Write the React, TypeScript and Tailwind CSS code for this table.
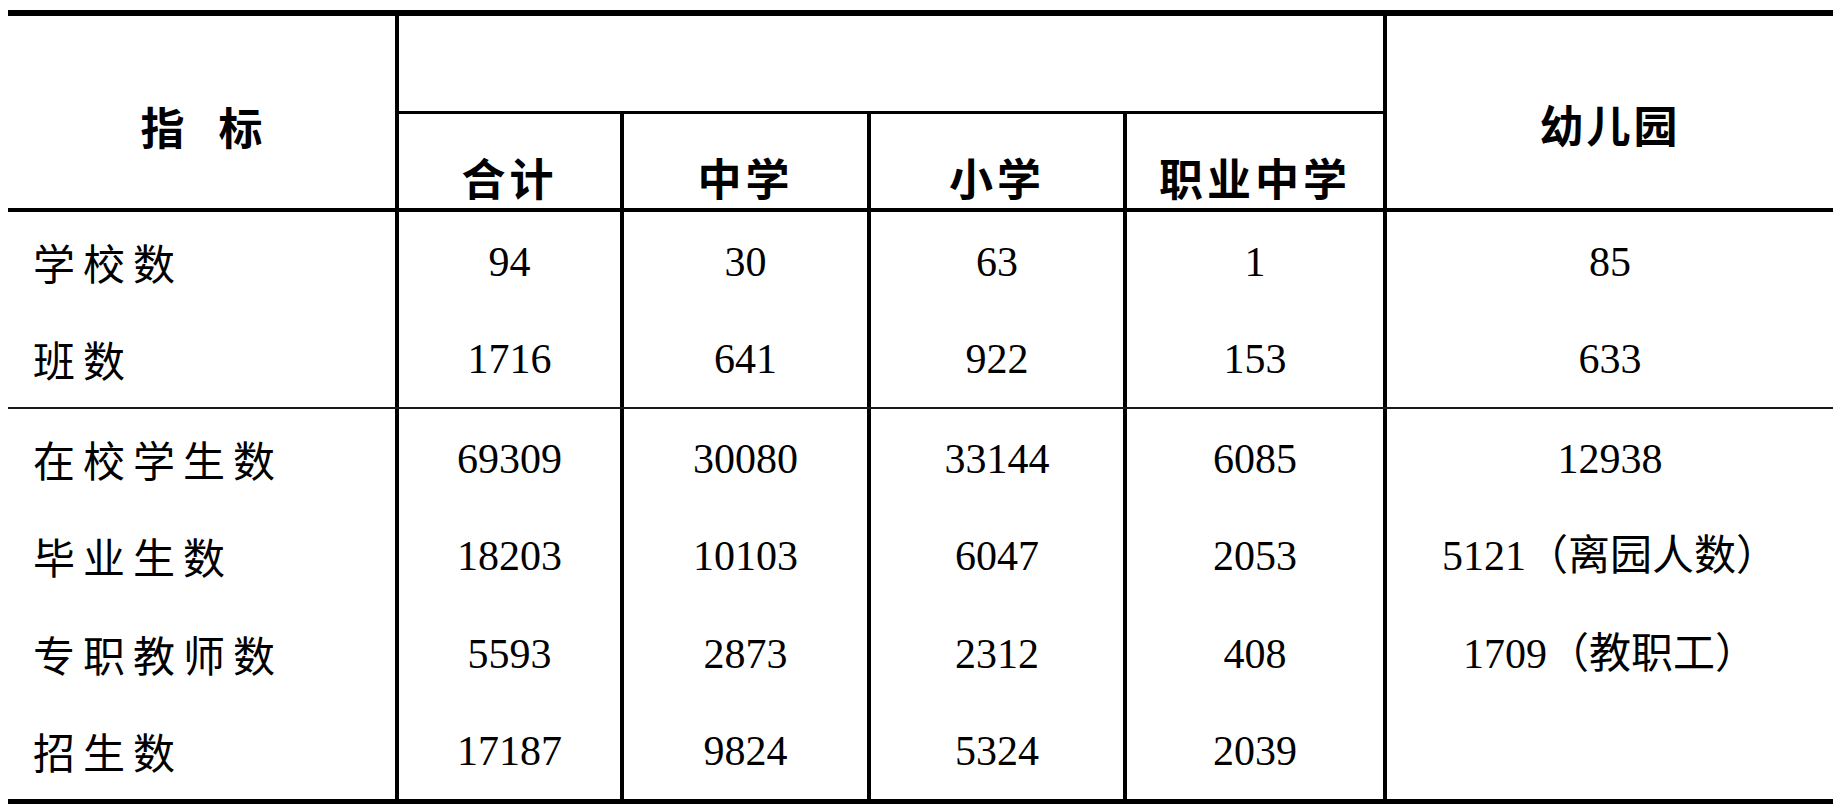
const cols = 'grid grid-cols-[387px_225px_247px_256px_260px_1fr]'

const groupA = [
  ['学校数', '94', '30', '63', '1', '85'],
  ['班数', '1716', '641', '922', '153', '633'],
]

const groupB = [
  ['在校学生数', '69309', '30080', '33144', '6085', '12938'],
  ['毕业生数', '18203', '10103', '6047', '2053', '5121（离园人数）'],
  ['专职教师数', '5593', '2873', '2312', '408', '1709（教职工）'],
  ['招生数', '17187', '9824', '5324', '2039', ''],
]

function Row({ cells }: { cells: string[] }) {
  const [label, ...vals] = cells
  return (
    <div className={`${cols} h-[97.5px]`}>
      <div className="flex items-center pl-[25px] pt-[1px] text-[42px] tracking-[8px] font-['Noto_Sans_CJK_SC',sans-serif] text-black">
        {label}
      </div>
      {vals.map((v, i) => (
        <div
          key={i}
          className="flex items-center justify-center pt-[3px] border-l-4 border-black text-[42px] font-['Liberation_Serif','Noto_Sans_CJK_SC',serif] text-black whitespace-nowrap"
        >
          {v}
        </div>
      ))}
    </div>
  )
}

export default function App() {
  const subHeads = ['合计', '中学', '小学', '职业中学']
  return (
    <div className="w-[1833px] h-[804px] bg-white overflow-hidden">
      <div className="h-[10px]" />
      <div className="ml-[8px] border-t-[6px] border-b-[5px] border-black">
        {/* header */}
        <div className={`${cols} grid-rows-[98px_94px] border-b-4 border-black font-['Noto_Sans_CJK_SC',sans-serif] font-bold text-black`}>
          <div className="row-span-2 flex items-center justify-center gap-[34px] pt-[28px] text-[44px]">
            <span>指</span>
            <span>标</span>
          </div>
          <div className="col-span-4 border-l-4 border-b-[3px] border-black" />
          <div className="row-span-2 flex items-center justify-center pt-[24px] border-l-4 border-black text-[44px] tracking-[3px]">
            幼儿园
          </div>
          {subHeads.map((h) => (
            <div key={h} className="flex items-center justify-center pt-[32px] border-l-4 border-black text-[44px] tracking-[4px]">
              {h}
            </div>
          ))}
        </div>

        <div className="border-b-2 border-[#1a1a1a]">
          {groupA.map((r) => (
            <Row key={r[0]} cells={r} />
          ))}
        </div>
        <div>
          {groupB.map((r) => (
            <Row key={r[0]} cells={r} />
          ))}
        </div>
      </div>
    </div>
  )
}
